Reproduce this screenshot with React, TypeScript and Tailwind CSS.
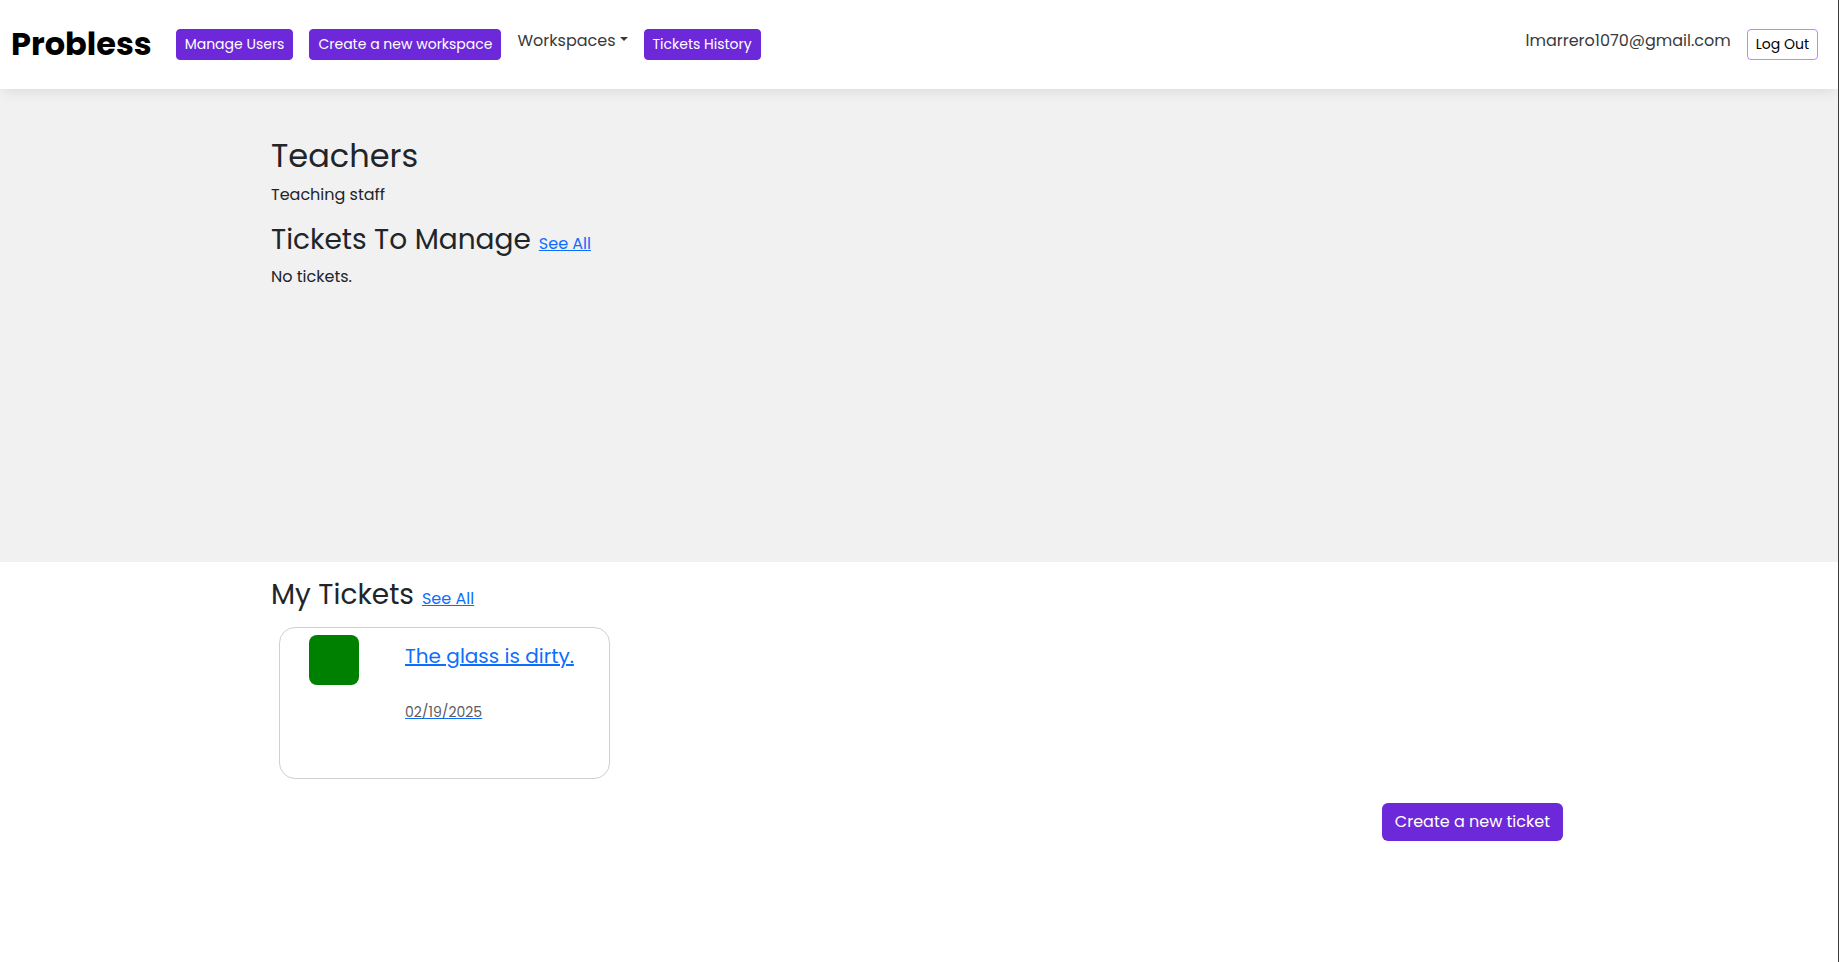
import React from "react";

const navButton =
  "flex h-[31px] items-center justify-center whitespace-nowrap rounded border px-2 pb-px text-[14px] leading-[21px] cursor-pointer";

const primary = "border-[#6d28d9] bg-[#6d28d9] text-white";

function NavBar() {
  return (
    <header className="relative flex h-[89px] items-center justify-between bg-white pl-[11px] pr-5 shadow-[0_7px_12px_-4px_rgba(0,0,0,0.09)]">
      <nav className="flex items-center">
        <a href="#" className="pb-0.5 whitespace-nowrap text-[32px] font-bold leading-[48px] text-black">
          Probless
        </a>
        <div className="ml-6 flex items-start gap-4">
          <button type="button" className={`${navButton} ${primary}`}>
            Manage Users
          </button>
          <button type="button" className={`${navButton} ${primary}`}>
            Create a new workspace
          </button>
          <button
            type="button"
            aria-haspopup="menu"
            className="flex cursor-pointer items-center gap-1 whitespace-nowrap text-[16px] leading-6 text-[#373a3c]"
          >
            Workspaces
            <svg aria-hidden="true" className="mb-1" width="8" height="4" viewBox="0 0 8 4" fill="currentColor">
              <path d="M0 0h8L4 4z" />
            </svg>
          </button>
          <button type="button" className={`${navButton} ${primary}`}>
            Tickets History
          </button>
        </div>
      </nav>
      <div className="flex items-start gap-4">
        <span className="whitespace-nowrap text-[16px] leading-6 text-[#373a3c]">lmarrero1070@gmail.com</span>
        <button type="button" className={`${navButton} border-[#c884fc] bg-white text-black`}>
          Log Out
        </button>
      </div>
    </header>
  );
}

function SectionTitle({ title }: { title: string }) {
  return (
    <div className="mb-2 flex items-baseline gap-2">
      <h3 className="text-[28px] leading-[34px]">{title}</h3>
      <a href="#" className="text-[16px] leading-6 text-[#0d6efd] underline">
        See All
      </a>
    </div>
  );
}

function TicketCard({ title, date }: { title: string; date: string }) {
  return (
    <a
      href="#"
      className="mx-2 mt-[15px] flex h-[152px] w-[331px] rounded-2xl border border-[#d0d0d0] pl-[29px] pt-[7px] text-[#0d6efd] underline"
    >
      <span className="size-[50px] shrink-0 rounded-lg bg-[#008000]" />
      <span className="ml-[46px] mt-1.5 flex flex-col gap-[31px]">
        <span className="whitespace-nowrap text-[20px] leading-[30px]">{title}</span>
        <span className="text-[14px] leading-[21px]">
          <span className="text-[#595c5f]">{date}</span>
        </span>
      </span>
    </a>
  );
}

export default function App() {
  return (
    <div className="min-h-screen border-r border-[#3c3c3c] bg-white font-['Poppins','Inter',sans-serif] text-[#212529]">
      <NavBar />
      <main>
        <section className="min-h-[473px] bg-[#f1f1f1] pt-12">
          <div className="mx-auto max-w-[1320px] px-3">
            <h2 className="mb-2 text-[32px] leading-[38px]">Teachers</h2>
            <p className="mb-4 text-[16px] leading-6">Teaching staff</p>
            <SectionTitle title="Tickets To Manage" />
            <p className="text-[16px] leading-6">No tickets.</p>
          </div>
        </section>
        <section className="mx-auto max-w-[1320px] px-3 pt-4">
          <SectionTitle title="My Tickets" />
          <TicketCard title="The glass is dirty." date="02/19/2025" />
          <div className="mt-6 flex justify-end pr-1">
            <button
              type="button"
              className="h-[38px] cursor-pointer whitespace-nowrap rounded-md bg-[#6d28d9] px-[13px] text-[16px] leading-6 text-white"
            >
              Create a new ticket
            </button>
          </div>
        </section>
      </main>
    </div>
  );
}
